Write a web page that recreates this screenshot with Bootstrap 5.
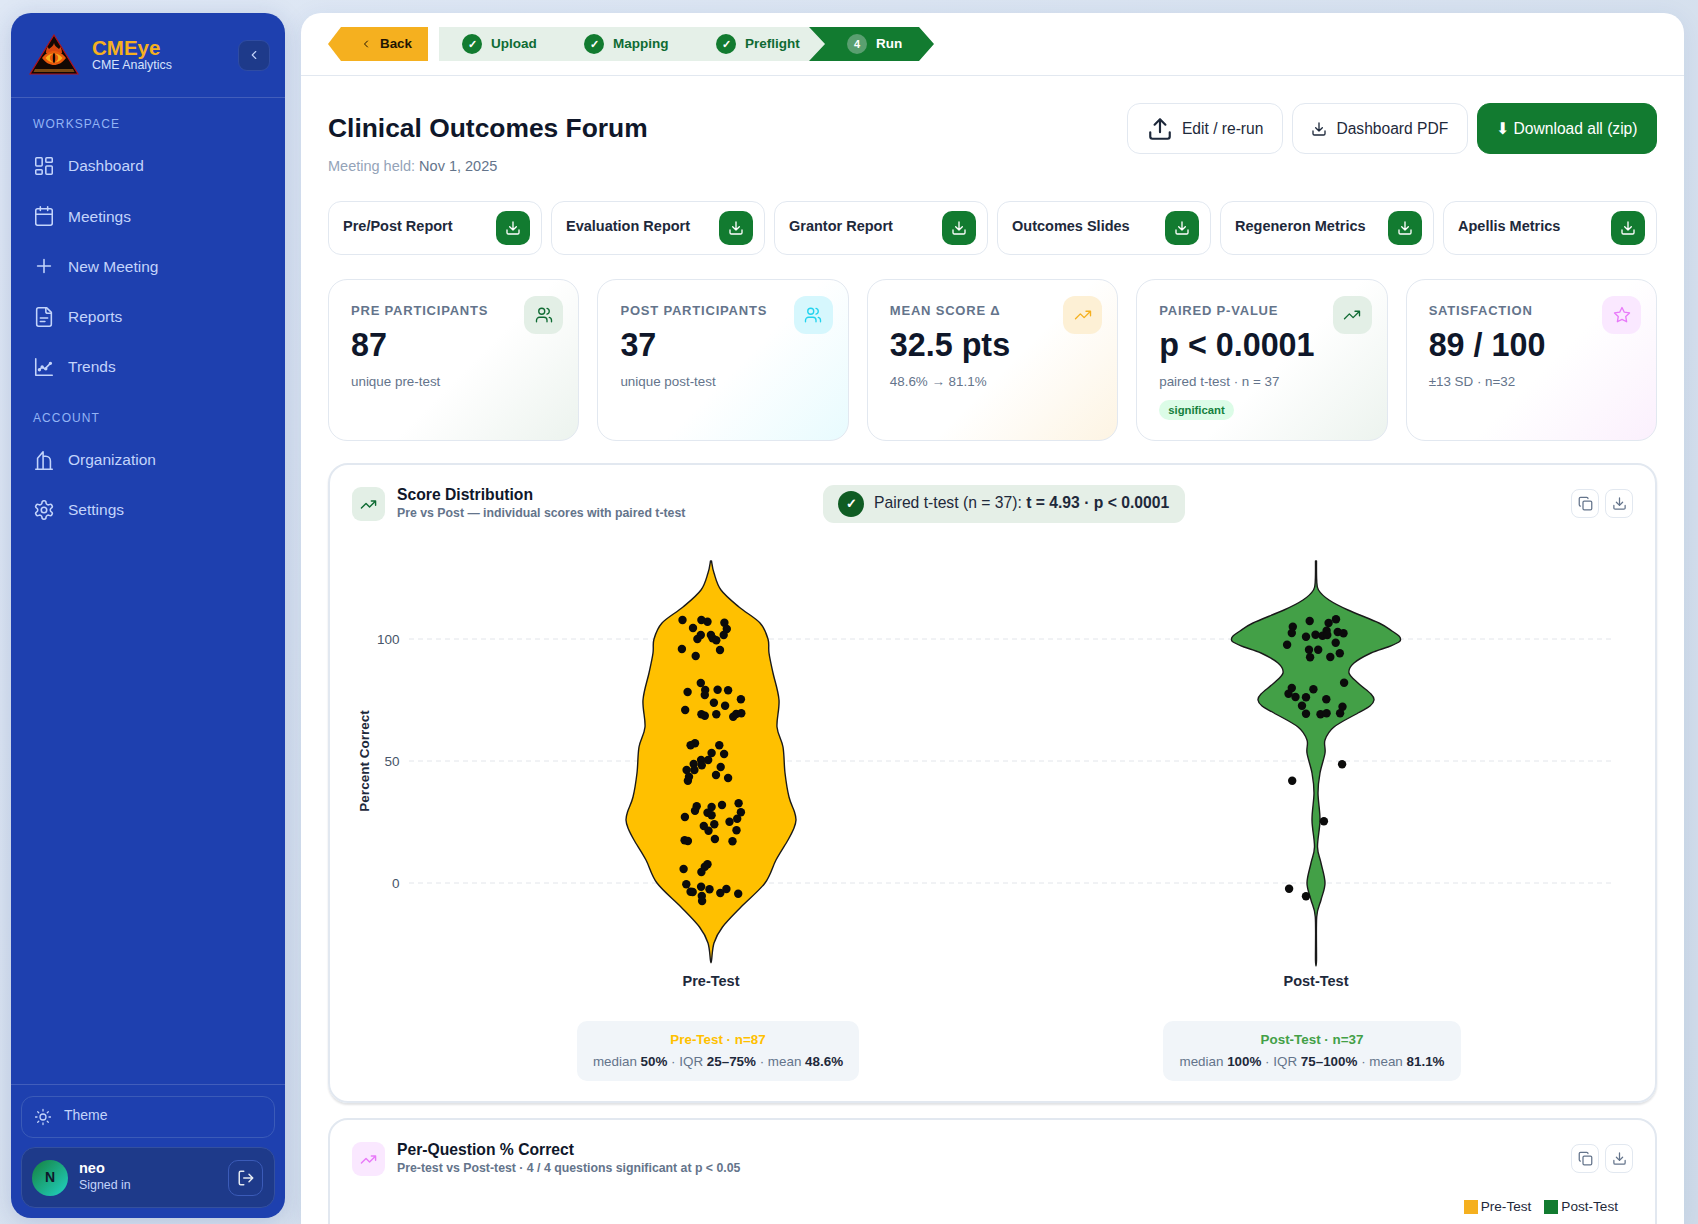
<!DOCTYPE html>
<html lang="en">
<head>
    <meta charset="UTF-8">
    <meta name="viewport" content="width=device-width, initial-scale=1.0">
    <title>Clinical Outcomes Forum</title>
    <link href="https://cdn.jsdelivr.net/npm/bootstrap@5.3.0/dist/css/bootstrap.min.css" rel="stylesheet">
    <style>
        html, body { height: 100%; overflow: hidden; }
        body {
            font-family: "Liberation Sans", Arial, sans-serif;
            background: linear-gradient(135deg, #dfe8f5, #cfdbe9);
            color: #0f172a;
        }
        .ico { fill: none; stroke: currentColor; stroke-width: 2; stroke-linecap: round; stroke-linejoin: round; flex: none; }

        /* shell */
        .shell { height: 100vh; padding: 13px 14px 6px 11px; gap: 16px; }
        .side {
            width: 274px; flex: none; background: #1e40af; border-radius: 20px; color: #c3d4fb;
            box-shadow: 0 4px 24px rgba(30, 58, 138, .18); overflow: hidden;
        }
        .side-head { height: 85px; padding: 0 15px 0 18px; border-bottom: 1px solid rgba(255,255,255,.16); flex: none; }
        .brand-text { margin-left: 13px; }
        .brand-name { font-size: 20.500px; line-height: 20px; font-weight: 700; color: #f5b01f; }
        .brand-sub { font-size: 12.400px; line-height: 14px; color: #d6e2fb; }
        .collapse-btn { width: 32px; height: 31px; background: #1e3a8a; border: 1px solid #2f4ca3; border-radius: 9px; color: #c3d4fb; }
        .side-label { font-size: 12px; letter-spacing: 1.100px; color: #93b4f5; padding-left: 22px; line-height: 16px; margin: 18px 0 9px; }
        .side-label.acct { margin: 18.5px 0 8px; }
        .side-link { height: 50.2px; padding-left: 22px; gap: 13px; font-size: 15.500px; color: #c3d4fb; text-decoration: none; flex: none; }
        .side-link .ico { stroke-width: 1.700; }
        .side-foot { border-top: 1px solid rgba(255,255,255,.16); padding: 11px 10px 10px; }
        .theme-btn { height: 42px; border: 1px solid #3b5bb8; border-radius: 12px; padding: 0 0 3px 12px; gap: 12px; font-size: 14px; color: #c3d4fb; }
        .theme-btn .ico { stroke-width: 1.700; margin-top: 3px; }
        .user-box { height: 61px; margin-top: 9px; background: #1e3a8a; border: 1px solid #34509f; border-radius: 14px; padding: 0 11px 0 10px; }
        .avatar { width: 36px; height: 36px; border-radius: 50%; background: linear-gradient(135deg, #15803d, #22d3c5); color: #0f172a; font-size: 14px; font-weight: 700; }
        .user-text { margin-left: 11px; padding-bottom: 3px; }
        .user-name { font-size: 14.500px; font-weight: 700; color: #fff; line-height: 17px; }
        .user-sub { font-size: 12.400px; color: #c3d4fb; line-height: 16px; }
        .logout-btn { width: 35px; height: 36px; border: 1px solid #3b5bb8; border-radius: 10px; color: #e2e8f0; }

        /* main panel */
        .main-panel { background: #fff; border-radius: 20px 20px 0 0; overflow: hidden; min-width: 0; box-shadow: 0 4px 24px rgba(30, 58, 138, .08); height: calc(100vh - 13px); }
        .topbar { height: 63px; padding-left: 27px; border-bottom: 1px solid #e2e8f0; }
        .back-step {
            width: 100px; height: 34px; background: #f5b01f; color: #1f1503; font-size: 13.400px; font-weight: 700;
            clip-path: polygon(13px 0, 100% 0, 100% 100%, 13px 100%, 0 50%); gap: 8.500px; padding-left: 31.500px;
        }
        .step-strip {
            height: 34px; width: 386px; margin-left: 11px; background: #e5f0e8; color: #0f6b33; font-size: 13.500px; font-weight: 700;
            clip-path: polygon(0 0, 370px 0, 386px 50%, 370px 100%, 0 100%);
        }
        .step-item { position: absolute; top: 0; height: 34px; gap: 9px; }
        .step-dot { width: 20px; height: 20px; border-radius: 50%; background: #127b30; color: #fff; font-size: 11px; font-weight: 700; }
        .step-run {
            width: 125px; height: 34px; margin-left: -16px; background: #127b30; color: #fff; font-size: 13.500px; font-weight: 700; gap: 9px; padding-left: 38px;
            clip-path: polygon(0 0, 110px 0, 125px 50%, 110px 100%, 0 100%, 16px 50%);
        }
        .step-run .step-dot { background: #5a9f70; }
        .page-body { padding: 27px 27px 0; }
        .title-col { padding-top: 9px; }
        .page-title { font-size: 26.400px; line-height: 32px; font-weight: 700; color: #0f172a; margin: 0; }
        .page-meta { font-size: 14.500px; color: #94a3b8; margin-top: 12px; line-height: 20px; }
        .page-meta span { color: #64748b; }
        .act-row { gap: 9px; }
        .act-btn { height: 51px; padding: 0 18.5px; border: 1px solid #e2e8f0; border-radius: 13px; background: #fff; font-size: 15.600px; color: #1e293b; gap: 9px; }
        .act-btn.go { background: #127b30; border-color: #127b30; color: #fff; }

        .report-row { margin-top: 25px; gap: 9px; }
        .report-cell { flex: 1 1 0; height: 54px; border: 1px solid #e2e8f0; border-radius: 13px; padding: 0 11px 0 14px; font-size: 14.500px; font-weight: 700; color: #1e293b; }
        .report-name { padding-bottom: 2px; }
        .report-dl { width: 34px; height: 34px; border-radius: 10px; background: #127b30; color: #fff; }

        .kpi-row { margin-top: 24px; gap: 18px; }
        .kpi-cell { position: relative; flex: 1 1 0; height: 162px; border: 1px solid #e2e8f0; border-radius: 19px; padding: 21px 22px; }
        .kpi-green { background: linear-gradient(135deg, #fff 55%, #ecf3ee); }
        .kpi-cyan { background: linear-gradient(135deg, #fff 55%, #e8fbfe); }
        .kpi-amber { background: linear-gradient(135deg, #fff 55%, #fdf4e3); }
        .kpi-pink { background: linear-gradient(135deg, #fff 55%, #fbf0fd); }
        .kpi-label { font-size: 13px; line-height: 20px; font-weight: 700; letter-spacing: .800px; text-transform: uppercase; color: #64748b; }
        .kpi-value { font-size: 32.300px; line-height: 42px; font-weight: 700; color: #0f172a; margin-top: 3px; }
        .kpi-sub { font-size: 13.400px; line-height: 18px; color: #64748b; margin-top: 7px; }
        .kpi-badge { display: inline-block; height: 20px; line-height: 20px; padding: 0 9px; margin-top: 9px; font-size: 11.300px; font-weight: 700; background: #dcfce7; color: #15803d; border-radius: 10px; }
        .kpi-icon { position: absolute; top: 16px; right: 15px; width: 39px; height: 38px; border-radius: 12px; }
        .kpi-icon .ico { stroke-width: 1.800; }
        .tint-green { background: #e3efe6; color: #0f6b33; }
        .tint-cyan { background: #d6f7fd; color: #22d3ee; }
        .tint-amber { background: #fdf0d5; color: #f5b01f; }
        .tint-pink { background: #fae8ff; color: #e879f9; }

        .chart-box { position: relative; margin-top: 22px; border: 2px solid #e2e8f0; border-radius: 20px; box-shadow: 0 2px 2px rgba(15, 23, 42, .12); height: 640px; }
        .chart-box.next { margin-top: 15px; box-shadow: none; height: 200px; }
        .chart-head { height: 78px; padding: 0 22px; }
        .chart-icon { width: 33px; height: 34px; border-radius: 9px; }
        .chart-text { padding-bottom: 1px; }
        .chart-title { font-size: 15.700px; line-height: 18px; font-weight: 700; color: #0f172a; margin-bottom: 2px; }
        .chart-sub { font-size: 12.300px; line-height: 15px; font-weight: 700; color: #64748b; }
        .test-pill { position: absolute; left: 493px; top: 20px; height: 38px; padding: 0 16px 2px 15px; gap: 10px; background: #e5efe7; border-radius: 11px; font-size: 15.700px; color: #1e293b; }
        .test-pill i { width: 26px; height: 26px; border-radius: 50%; background: #0f5c23; color: #fff; font-style: normal; font-size: 13px; font-weight: 700; margin-top: 2px; }
        .tool-row { gap: 6px; margin-bottom: 1px; }
        .tool-btn { width: 28px; height: 29px; border: 1px solid #e2e8f0; border-radius: 8px; color: #64748b; }
        .violin-svg { position: absolute; left: -2px; top: -2px; }
        .violin-svg text { font-family: "Liberation Sans", Arial, sans-serif; }
        .stat-row { position: absolute; left: 0; right: 0; top: 556px; }
        .stat-cell { position: absolute; top: 0; height: 60px; background: #f1f5f9; border-radius: 10px; font-size: 13.400px; color: #64748b; text-align: center; padding-top: 8px; line-height: 22px; white-space: nowrap; }
        .stat-cell b { font-weight: 700; color: #1e293b; }
        .stat-head { font-weight: 700; }
        .legend-row { position: absolute; right: 37px; top: 77px; gap: 13px; font-size: 13.600px; color: #1e293b; line-height: 20px; }
        .legend-swatch { width: 14px; height: 14px; margin-right: 3px; }
    </style>
</head>
<body>
    <!-- icon sprite -->
    <svg width="0" height="0" class="position-absolute">
        <symbol id="i-dash" viewBox="0 0 24 24"><rect x="3" y="3" width="7" height="9" rx="1"/><rect x="14" y="3" width="7" height="5" rx="1"/><rect x="14" y="12" width="7" height="9" rx="1"/><rect x="3" y="16" width="7" height="5" rx="1"/></symbol>
        <symbol id="i-cal" viewBox="0 0 24 24"><path d="M8 2v4M16 2v4"/><rect x="3" y="4" width="18" height="18" rx="2"/><path d="M3 10h18"/></symbol>
        <symbol id="i-plus" viewBox="0 0 24 24"><path d="M5 12h14M12 5v14"/></symbol>
        <symbol id="i-file" viewBox="0 0 24 24"><path d="M15 2H6a2 2 0 0 0-2 2v16a2 2 0 0 0 2 2h12a2 2 0 0 0 2-2V7Z"/><path d="M14 2v4a2 2 0 0 0 2 2h4"/><path d="M8 13h8M8 17h5"/></symbol>
        <symbol id="i-trend" viewBox="0 0 24 24"><path d="M3 3v18h18"/><path d="M7 15l3-3 3 2 6-6"/><circle cx="7" cy="15" r="1"/><circle cx="10" cy="12" r="1"/><circle cx="14" cy="14" r="1"/><circle cx="19" cy="8" r="1"/></symbol>
        <symbol id="i-org" viewBox="0 0 24 24"><path d="M3 22h18M5 22V10l6-7v19M11 8h3a5 5 0 0 1 5 5v9"/></symbol>
        <symbol id="i-gear" viewBox="0 0 24 24"><path d="M12.22 2h-.44a2 2 0 0 0-2 2v.18a2 2 0 0 1-1 1.73l-.43.25a2 2 0 0 1-2 0l-.15-.08a2 2 0 0 0-2.73.73l-.22.38a2 2 0 0 0 .73 2.73l.15.1a2 2 0 0 1 1 1.72v.51a2 2 0 0 1-1 1.74l-.15.09a2 2 0 0 0-.73 2.73l.22.38a2 2 0 0 0 2.73.73l.15-.08a2 2 0 0 1 2 0l.43.25a2 2 0 0 1 1 1.73V20a2 2 0 0 0 2 2h.44a2 2 0 0 0 2-2v-.18a2 2 0 0 1 1-1.73l.43-.25a2 2 0 0 1 2 0l.15.08a2 2 0 0 0 2.73-.73l.22-.39a2 2 0 0 0-.73-2.73l-.15-.08a2 2 0 0 1-1-1.74v-.5a2 2 0 0 1 1-1.74l.15-.09a2 2 0 0 0 .73-2.73l-.22-.38a2 2 0 0 0-2.73-.73l-.15.08a2 2 0 0 1-2 0l-.43-.25a2 2 0 0 1-1-1.73V4a2 2 0 0 0-2-2z"/><circle cx="12" cy="12" r="3"/></symbol>
        <symbol id="i-sun" viewBox="0 0 24 24"><circle cx="12" cy="12" r="4"/><path d="M12 2v2M12 20v2M4.93 4.93l1.41 1.41M17.66 17.66l1.41 1.41M2 12h2M20 12h2M6.34 17.66l-1.41 1.41M19.07 4.93l-1.41 1.41"/></symbol>
        <symbol id="i-out" viewBox="0 0 24 24"><path d="M9 21H5a2 2 0 0 1-2-2V5a2 2 0 0 1 2-2h4M16 17l5-5-5-5M21 12H9"/></symbol>
        <symbol id="i-users" viewBox="0 0 24 24"><path d="M16 21v-2a4 4 0 0 0-4-4H6a4 4 0 0 0-4 4v2"/><circle cx="9" cy="7" r="4"/><path d="M22 21v-2a4 4 0 0 0-3-3.87M16 3.13a4 4 0 0 1 0 7.75"/></symbol>
        <symbol id="i-up" viewBox="0 0 24 24"><path d="M22 7l-8.500 8.500-5-5L2 17M16 7h6v6"/></symbol>
        <symbol id="i-star" viewBox="0 0 24 24"><polygon points="12 2 15.09 8.26 22 9.27 17 14.14 18.18 21.02 12 17.77 5.820 21.02 7 14.14 2 9.27 8.91 8.26"/></symbol>
        <symbol id="i-copy" viewBox="0 0 24 24"><rect x="8" y="8" width="14" height="14" rx="2"/><path d="M4 16c-1.100 0-2-.9-2-2V4c0-1.100.9-2 2-2h10c1.100 0 2 .9 2 2"/></symbol>
        <symbol id="i-down" viewBox="0 0 24 24"><path d="M21 15v4a2 2 0 0 1-2 2H5a2 2 0 0 1-2-2v-4M7 10l5 5 5-5M12 15V3"/></symbol>
        <symbol id="i-upload" viewBox="0 0 24 24"><path d="M21 15v4a2 2 0 0 1-2 2H5a2 2 0 0 1-2-2v-4M17 8l-5-5-5 5M12 3v12"/></symbol>
    </svg>

    <div class="shell d-flex">
        <!-- sidebar -->
        <aside class="side d-flex flex-column">
            <div class="side-head d-flex align-items-center">
                <svg width="50" height="42" viewBox="0 0 50 42" class="flex-none">
                    <polygon points="25,1 49,40 1,40" fill="#120804" stroke="#b3121a" stroke-width="1.200"/>
                    <path d="M6 35h38l1.500 3H4.500z" fill="#7a4a12"/>
                    <path d="M25 9c.5 3 3 4 5 6 1-1 1-1.500 1-2.500 1.500 2 2 4 2 6.500H17c0-2.500.5-4.500 2-6.500 0 1 0 1.500 1 2.500 2-2 4.500-3 5-6z" fill="#d9480f"/>
                    <path d="M13 24c4-5 8-7 12-7s8 2 12 7c-4 5-8 7-12 7s-8-2-12-7z" fill="#e8590c"/>
                    <path d="M16.500 24c3-3.500 5.500-4.500 8.500-4.500s5.500 1 8.500 4.500c-3 3.500-5.500 4.500-8.500 4.500s-5.500-1-8.500-4.500z" fill="#f5b01f"/>
                    <circle cx="25" cy="24" r="4.200" fill="#e8590c"/>
                    <ellipse cx="25" cy="24" rx="1.200" ry="5" fill="#120804"/>
                </svg>
                <div class="brand-text flex-grow-1">
                    <div class="brand-name">CMEye</div>
                    <div class="brand-sub">CME Analytics</div>
                </div>
                <div class="collapse-btn d-flex align-items-center justify-content-center">
                    <svg class="ico" width="14" height="14" viewBox="0 0 24 24"><path d="M15 18l-6-6 6-6"/></svg>
                </div>
            </div>

            <div class="side-label">WORKSPACE</div>
            <a class="side-link d-flex align-items-center"><svg class="ico" width="22" height="22"><use href="#i-dash"/></svg>Dashboard</a>
            <a class="side-link d-flex align-items-center"><svg class="ico" width="22" height="22"><use href="#i-cal"/></svg>Meetings</a>
            <a class="side-link d-flex align-items-center"><svg class="ico" width="22" height="22"><use href="#i-plus"/></svg>New Meeting</a>
            <a class="side-link d-flex align-items-center"><svg class="ico" width="22" height="22"><use href="#i-file"/></svg>Reports</a>
            <a class="side-link d-flex align-items-center"><svg class="ico" width="22" height="22"><use href="#i-trend"/></svg>Trends</a>
            <div class="side-label acct">ACCOUNT</div>
            <a class="side-link d-flex align-items-center"><svg class="ico" width="22" height="22"><use href="#i-org"/></svg>Organization</a>
            <a class="side-link d-flex align-items-center"><svg class="ico" width="22" height="22"><use href="#i-gear"/></svg>Settings</a>

            <div class="side-foot mt-auto">
                <div class="theme-btn d-flex align-items-center"><svg class="ico" width="18" height="18"><use href="#i-sun"/></svg>Theme</div>
                <div class="user-box d-flex align-items-center">
                    <div class="avatar d-flex align-items-center justify-content-center">N</div>
                    <div class="user-text flex-grow-1">
                        <div class="user-name">neo</div>
                        <div class="user-sub">Signed in</div>
                    </div>
                    <div class="logout-btn d-flex align-items-center justify-content-center"><svg class="ico" width="18" height="18"><use href="#i-out"/></svg></div>
                </div>
            </div>
        </aside>

        <!-- main -->
        <main class="main-panel flex-grow-1">
            <div class="topbar d-flex align-items-center">
                <div class="back-step d-flex align-items-center">
                    <svg class="ico" width="12" height="12" viewBox="0 0 24 24"><path d="M15 18l-6-6 6-6"/></svg>Back
                </div>
                <div class="step-strip position-relative">
                    <div class="step-item d-flex align-items-center" style="left:23px"><span class="step-dot d-flex align-items-center justify-content-center">✓</span>Upload</div>
                    <div class="step-item d-flex align-items-center" style="left:145px"><span class="step-dot d-flex align-items-center justify-content-center">✓</span>Mapping</div>
                    <div class="step-item d-flex align-items-center" style="left:277px"><span class="step-dot d-flex align-items-center justify-content-center">✓</span>Preflight</div>
                </div>
                <div class="step-run d-flex align-items-center"><span class="step-dot d-flex align-items-center justify-content-center">4</span>Run</div>
            </div>

            <div class="page-body">
                <div class="d-flex justify-content-between">
                    <div class="title-col">
                        <h1 class="page-title">Clinical Outcomes Forum</h1>
                        <div class="page-meta">Meeting held: <span>Nov 1, 2025</span></div>
                    </div>
                    <div class="act-row d-flex">
                        <div class="act-btn d-flex align-items-center"><svg class="ico" width="26" height="26"><use href="#i-upload"/></svg>Edit / re-run</div>
                        <div class="act-btn d-flex align-items-center"><svg class="ico" width="16" height="16"><use href="#i-down"/></svg>Dashboard PDF</div>
                        <div class="act-btn go d-flex align-items-center">⬇ Download all (zip)</div>
                    </div>
                </div>

                <div class="report-row d-flex" id="reportRow"></div>

                <div class="kpi-row d-flex">
                    <div class="kpi-cell kpi-green">
                        <div class="kpi-label">Pre Participants</div>
                        <div class="kpi-value">87</div>
                        <div class="kpi-sub">unique pre-test</div>
                        <div class="kpi-icon tint-green d-flex align-items-center justify-content-center"><svg class="ico" width="18" height="18"><use href="#i-users"/></svg></div>
                    </div>
                    <div class="kpi-cell kpi-cyan">
                        <div class="kpi-label">Post Participants</div>
                        <div class="kpi-value">37</div>
                        <div class="kpi-sub">unique post-test</div>
                        <div class="kpi-icon tint-cyan d-flex align-items-center justify-content-center"><svg class="ico" width="18" height="18"><use href="#i-users"/></svg></div>
                    </div>
                    <div class="kpi-cell kpi-amber">
                        <div class="kpi-label">Mean Score Δ</div>
                        <div class="kpi-value">32.5 pts</div>
                        <div class="kpi-sub">48.6% → 81.1%</div>
                        <div class="kpi-icon tint-amber d-flex align-items-center justify-content-center"><svg class="ico" width="18" height="18"><use href="#i-up"/></svg></div>
                    </div>
                    <div class="kpi-cell kpi-green">
                        <div class="kpi-label">Paired p-value</div>
                        <div class="kpi-value">p &lt; 0.0001</div>
                        <div class="kpi-sub">paired t-test · n = 37</div>
                        <span class="kpi-badge">significant</span>
                        <div class="kpi-icon tint-green d-flex align-items-center justify-content-center"><svg class="ico" width="18" height="18"><use href="#i-up"/></svg></div>
                    </div>
                    <div class="kpi-cell kpi-pink">
                        <div class="kpi-label">Satisfaction</div>
                        <div class="kpi-value">89 / 100</div>
                        <div class="kpi-sub">±13 SD · n=32</div>
                        <div class="kpi-icon tint-pink d-flex align-items-center justify-content-center"><svg class="ico" width="18" height="18"><use href="#i-star"/></svg></div>
                    </div>
                </div>

                <!-- score distribution -->
                <div class="chart-box">
                    <svg class="violin-svg" id="violinSvg" width="1329" height="560" viewBox="328 463 1329 560"></svg>
                    <div class="chart-head position-relative d-flex align-items-center">
                        <div class="chart-icon tint-green d-flex align-items-center justify-content-center"><svg class="ico" width="17" height="17"><use href="#i-up"/></svg></div>
                        <div class="chart-text ms-2 ps-1 flex-grow-1">
                            <div class="chart-title">Score Distribution</div>
                            <div class="chart-sub">Pre vs Post — individual scores with paired t-test</div>
                        </div>
                        <div class="tool-row d-flex align-items-center">
                            <div class="tool-btn d-flex align-items-center justify-content-center"><svg class="ico" width="15" height="15"><use href="#i-copy"/></svg></div>
                            <div class="tool-btn d-flex align-items-center justify-content-center"><svg class="ico" width="15" height="15"><use href="#i-down"/></svg></div>
                        </div>
                        <div class="test-pill d-flex align-items-center"><i class="d-flex align-items-center justify-content-center">✓</i><span>Paired t-test (n = 37): <b>t = 4.93 · p &lt; 0.0001</b></span></div>
                    </div>
                    <div class="stat-row">
                        <div class="stat-cell" style="left:247px;width:282px">
                            <div class="stat-head" style="color:#ffc000">Pre-Test · n=87</div>
                            <div>median <b>50%</b> · IQR <b>25–75%</b> · mean <b>48.6%</b></div>
                        </div>
                        <div class="stat-cell" style="left:833px;width:298px">
                            <div class="stat-head" style="color:#43a047">Post-Test · n=37</div>
                            <div>median <b>100%</b> · IQR <b>75–100%</b> · mean <b>81.1%</b></div>
                        </div>
                    </div>
                </div>

                <!-- per question -->
                <div class="chart-box next">
                    <div class="chart-head d-flex align-items-center">
                        <div class="chart-icon tint-pink d-flex align-items-center justify-content-center"><svg class="ico" width="17" height="17"><use href="#i-up"/></svg></div>
                        <div class="chart-text ms-2 ps-1 flex-grow-1">
                            <div class="chart-title">Per-Question % Correct</div>
                            <div class="chart-sub">Pre-test vs Post-test · 4 / 4 questions significant at p &lt; 0.05</div>
                        </div>
                        <div class="tool-row d-flex align-items-center">
                            <div class="tool-btn d-flex align-items-center justify-content-center"><svg class="ico" width="15" height="15"><use href="#i-copy"/></svg></div>
                            <div class="tool-btn d-flex align-items-center justify-content-center"><svg class="ico" width="15" height="15"><use href="#i-down"/></svg></div>
                        </div>
                    </div>
                    <div class="legend-row d-flex align-items-center">
                        <span class="d-flex align-items-center"><span class="legend-swatch" style="background:#f5b01f"></span>Pre-Test</span>
                        <span class="d-flex align-items-center"><span class="legend-swatch" style="background:#127b30"></span>Post-Test</span>
                    </div>
                </div>
            </div>
        </main>
    </div>

    <script>
        // report download chips
        const reports = ["Pre/Post Report", "Evaluation Report", "Grantor Report", "Outcomes Slides", "Regeneron Metrics", "Apellis Metrics"];
        document.getElementById("reportRow").innerHTML = reports.map(r => `
            <div class="report-cell d-flex align-items-center justify-content-between"><span class="report-name">${r}</span>
                <span class="report-dl d-flex align-items-center justify-content-center"><svg class="ico" width="16" height="16"><use href="#i-down"/></svg></span>
            </div>`).join("");

        // violin outlines: [y, half width], page pixels
        const preShape = [[561,.5],[573,3],[590,10],[607,28],[623,49],[639,57],[653,58],[673,62],[700,68],[727,66],[747,72],[773,74],[797,78],[812,83.5],[820,85],[828,83],[840,77],[860,65],[883,54],[907,30],[927,11.5],[943,3],[960.5,.5]];
        const postShape = [[561,.5],[580,.7],[590,2.5],[600,13],[610,32],[623,63],[631,76],[636,83],[639,84.5],[642,83],[647,72],[653,55],[663,38],[673,33],[683,42],[694,55],[700,58],[706,54],[713,42],[727,18],[740,9],[753,9],[773,4],[793,2],[820,4],[847,1.5],[863,5],[883,9],[900,5],[917,.7],[960.5,.5]];

        // dots from the 3x crops: [x, y] in crop units
        const preDots = [[246,240],[302,240],[320,245],[370,248],[277,264],[377,267],[368,285],[300,285],[290,297],[330,285],[335,295],[346,301],[244,327],[357,330],[285,348],
            [300,429],[261,456],[313,450],[312,465],[350,449],[381,451],[419,478],[339,488],[372,497],[254,510],[302,523],[312,527],[346,523],[396,530],[405,522],[420,520],
            [283,610],[270,616],[355,616],[332,639],[369,642],[301,660],[322,660],[279,672],[303,676],[281,690],[258,690],[359,681],[345,705],[265,710],[262,722],[381,714],
            [288,799],[283,812],[363,795],[412,790],[332,801],[320,818],[332,826],[419,817],[408,836],[253,831],[385,845],[340,853],[309,858],[323,872],[406,871],[252,901],[262,903],[342,897],[394,904],
            [320,973],[312,980],[302,996],[249,987],[257,1033],[270,1055],[276,1056],[301,1040],[326,1048],[358,1059],[376,1047],[411,1061],[303,1068],[304,1083]];
        const postDots = [[278,260],[275,279],[328,243],[384,249],[406,238],[378,272],[345,284],[366,287],[380,285],[411,276],[428,280],[317,290],[405,308],[261,314],[326,329],[353,329],[329,352],[389,351],[417,340],
            [430,428],[275,444],[339,448],[265,461],[286,471],[317,472],[377,478],[305,497],[425,500],[317,521],[360,523],[378,520],[418,520],
            [424,673],[276,722],[370,844],[267,1046],[317,1069]];

        // catmull-rom through the points, down one side and back up the other
        function violinPath(cx, shape) {
            const pts = shape.map(p => [cx + p[1], p[0]]).concat(shape.slice().reverse().map(p => [cx - p[1], p[0]]));
            let d = `M${pts[0][0]} ${pts[0][1]}`;
            for (let i = 0; i < pts.length - 1; i++) {
                const p0 = pts[Math.max(i - 1, 0)], p1 = pts[i], p2 = pts[i + 1], p3 = pts[Math.min(i + 2, pts.length - 1)];
                const c1 = [p1[0] + (p2[0] - p0[0]) / 6, p1[1] + (p2[1] - p0[1]) / 6];
                const c2 = [p2[0] - (p3[0] - p1[0]) / 6, p2[1] - (p3[1] - p1[1]) / 6];
                d += `C${c1[0].toFixed(1)} ${c1[1].toFixed(1)} ${c2[0].toFixed(1)} ${c2[1].toFixed(1)} ${p2[0].toFixed(1)} ${p2[1].toFixed(1)}`;
            }
            return d + "Z";
        }

        let svg = "";
        [[100, 639], [50, 761], [0, 883]].forEach(t => {
            svg += `<line x1="409" x2="1614" y1="${t[1]}" y2="${t[1]}" stroke="#e2e5ea" stroke-width="1" stroke-dasharray="5 4"/>`;
            svg += `<text x="399.500" y="${t[1] + 4.5}" text-anchor="end" font-size="13.500" fill="#475569">${t[0]}</text>`;
        });
        svg += `<text transform="translate(368.500 761) rotate(-90)" text-anchor="middle" font-size="13.500" font-weight="700" fill="#1e293b">Percent Correct</text>`;
        svg += `<path d="${violinPath(711, preShape)}" fill="#ffc000" stroke="#1a1a1a" stroke-width="1.400" stroke-linejoin="round"/>`;
        svg += `<path d="${violinPath(1316, postShape)}" fill="#43a047" stroke="#1a1a1a" stroke-width="1.400" stroke-linejoin="round"/>`;
        preDots.forEach(p => { svg += `<circle cx="${(599.5 + p[0] / 2.9625).toFixed(1)}" cy="${(540 + p[1] / 3).toFixed(1)}" r="4.200" fill="#0b0b0b"/>`; });
        postDots.forEach(p => { svg += `<circle cx="${(1199 + p[0] / 2.9625).toFixed(1)}" cy="${(540 + p[1] / 3).toFixed(1)}" r="4.200" fill="#0b0b0b"/>`; });
        svg += `<text x="711" y="985.500" text-anchor="middle" font-size="14.500" font-weight="700" fill="#1e293b">Pre-Test</text>`;
        svg += `<text x="1316" y="985.500" text-anchor="middle" font-size="14.500" font-weight="700" fill="#1e293b">Post-Test</text>`;
        document.getElementById("violinSvg").innerHTML = svg;
    </script>
    <script src="https://cdn.jsdelivr.net/npm/bootstrap@5.3.0/dist/js/bootstrap.bundle.min.js"></script>
</body>
</html>
